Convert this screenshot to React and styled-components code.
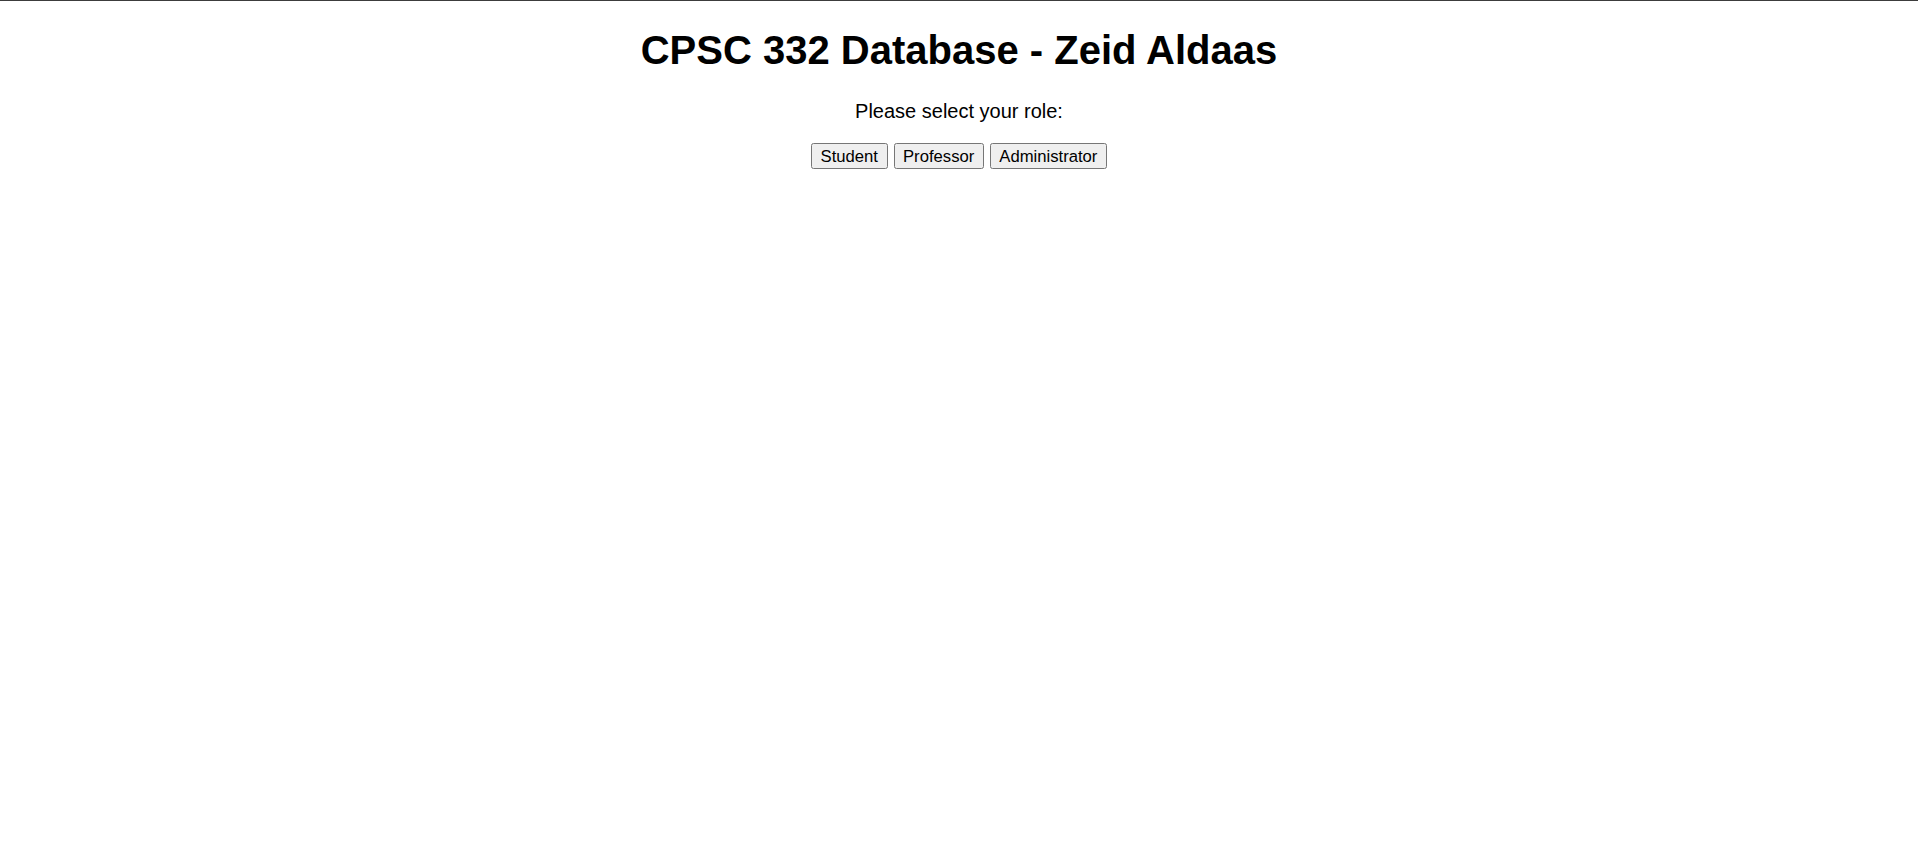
import React from "react";
import styled, { createGlobalStyle } from "styled-components";

const GlobalStyle = createGlobalStyle`
  html, body {
    margin: 0;
    padding: 0;
    background: #ffffff;
  }
  body {
    font-family: "Liberation Sans", Arial, sans-serif;
    color: #000;
    border-top: 1px solid #3c3c3c;
  }
`;

const Page = styled.main`
  display: flex;
  flex-direction: column;
  align-items: center;
  padding: 0 10px;
  text-align: center;
`;

const Title = styled.h1`
  margin: 26px 0 0;
  font-size: 40px;
  line-height: 46px;
  font-weight: 700;
`;

const Prompt = styled.p`
  margin: 27px 0 0;
  font-size: 20px;
  line-height: 23px;
`;

const RoleBar = styled.div`
  display: flex;
  justify-content: center;
  gap: 6px;
  margin-top: 20px;
`;

const RoleButton = styled.button`
  font-family: "Liberation Sans", Arial, sans-serif;
  font-size: 16.67px;
  line-height: 19px;
  height: 26px;
  padding: 2px 8.5px;
  color: #000;
  background: #efefef;
  border: 1px solid #767676;
  border-radius: 2.5px;
  cursor: pointer;
  &:hover {
    background: #e5e5e5;
  }
`;

const roles = ["Student", "Professor", "Administrator"];

export default function App() {
  return (
    <>
      <GlobalStyle />
      <Page>
        <Title>CPSC 332 Database - Zeid Aldaas</Title>
        <Prompt>Please select your role:</Prompt>
        <RoleBar>
          {roles.map((r) => (
            <RoleButton key={r} type="button">
              {r}
            </RoleButton>
          ))}
        </RoleBar>
      </Page>
    </>
  );
}
